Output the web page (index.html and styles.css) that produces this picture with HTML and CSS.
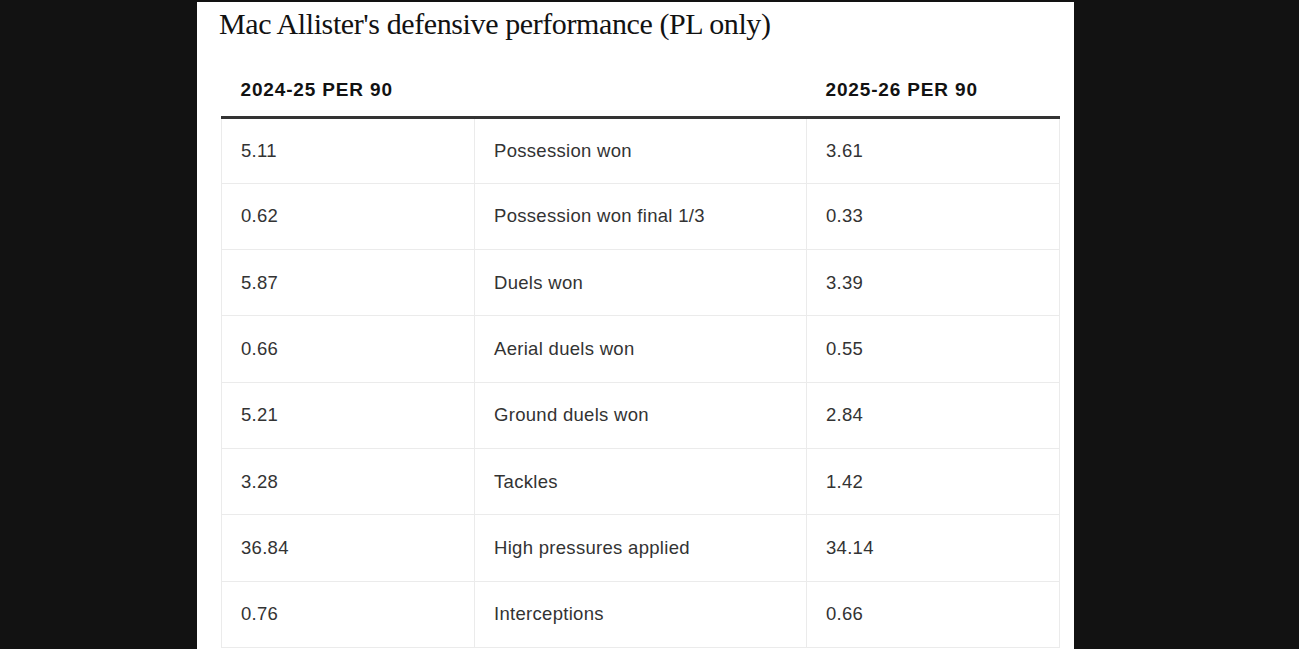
FILE: index.html
```html
<!DOCTYPE html>
<html>
<head>
<meta charset="utf-8">
<link rel="stylesheet" href="styles.css">
</head>
<body>
<div class="panel">
  <h1 class="title">Mac Allister's defensive performance (PL only)</h1>
  <table class="stats">
    <thead>
      <tr>
        <th class="c1">2024-25 PER 90</th>
        <th class="c2"></th>
        <th class="c3">2025-26 PER 90</th>
      </tr>
    </thead>
    <tbody>
      <tr><td>5.11</td><td>Possession won</td><td>3.61</td></tr>
      <tr><td>0.62</td><td>Possession won final 1/3</td><td>0.33</td></tr>
      <tr><td>5.87</td><td>Duels won</td><td>3.39</td></tr>
      <tr><td>0.66</td><td>Aerial duels won</td><td>0.55</td></tr>
      <tr><td>5.21</td><td>Ground duels won</td><td>2.84</td></tr>
      <tr><td>3.28</td><td>Tackles</td><td>1.42</td></tr>
      <tr><td>36.84</td><td>High pressures applied</td><td>34.14</td></tr>
      <tr><td>0.76</td><td>Interceptions</td><td>0.66</td></tr>
    </tbody>
  </table>
</div>
</body>
</html>
```

FILE: styles.css
```css
html, body {
  margin: 0;
  padding: 0;
  background: #121212;
  height: 100%;
  overflow: hidden;
}
.panel {
  margin: 2px 0 0 197px;
  width: 877px;
  min-height: 700px;
  background: #ffffff;
  padding-top: 1px;
}
.title {
  margin: 4px 0 0 22px;
  font-family: "Liberation Serif", "Times New Roman", serif;
  font-weight: normal;
  font-size: 30px;
  line-height: 34px;
  color: #121212;
  letter-spacing: -0.4px;
}
.stats {
  margin: 0 0 0 24px;
  width: 838px;
  border-collapse: collapse;
  table-layout: fixed;
  font-family: "Liberation Sans", Arial, sans-serif;
}
.stats th {
  height: 76px;
  padding: 39px 0 0 19px;
  box-sizing: border-box;
  text-align: left;
  font-size: 19px;
  font-weight: bold;
  color: #121212;
  letter-spacing: 0.85px;
  border-bottom: 3px solid #333333;
  vertical-align: top;
  line-height: 20px;
}
.stats .c1 { width: 253px; }
.stats .c2 { width: 332px; }
.stats .c3 { width: 253px; }
.stats td {
  height: 66.33px;
  padding: 0 0 0 19px;
  box-sizing: border-box;
  font-size: 18.5px;
  letter-spacing: 0.3px;
  color: #333333;
  border: 1px solid #ebebeb;
  border-top: none;
  vertical-align: middle;
}
```
